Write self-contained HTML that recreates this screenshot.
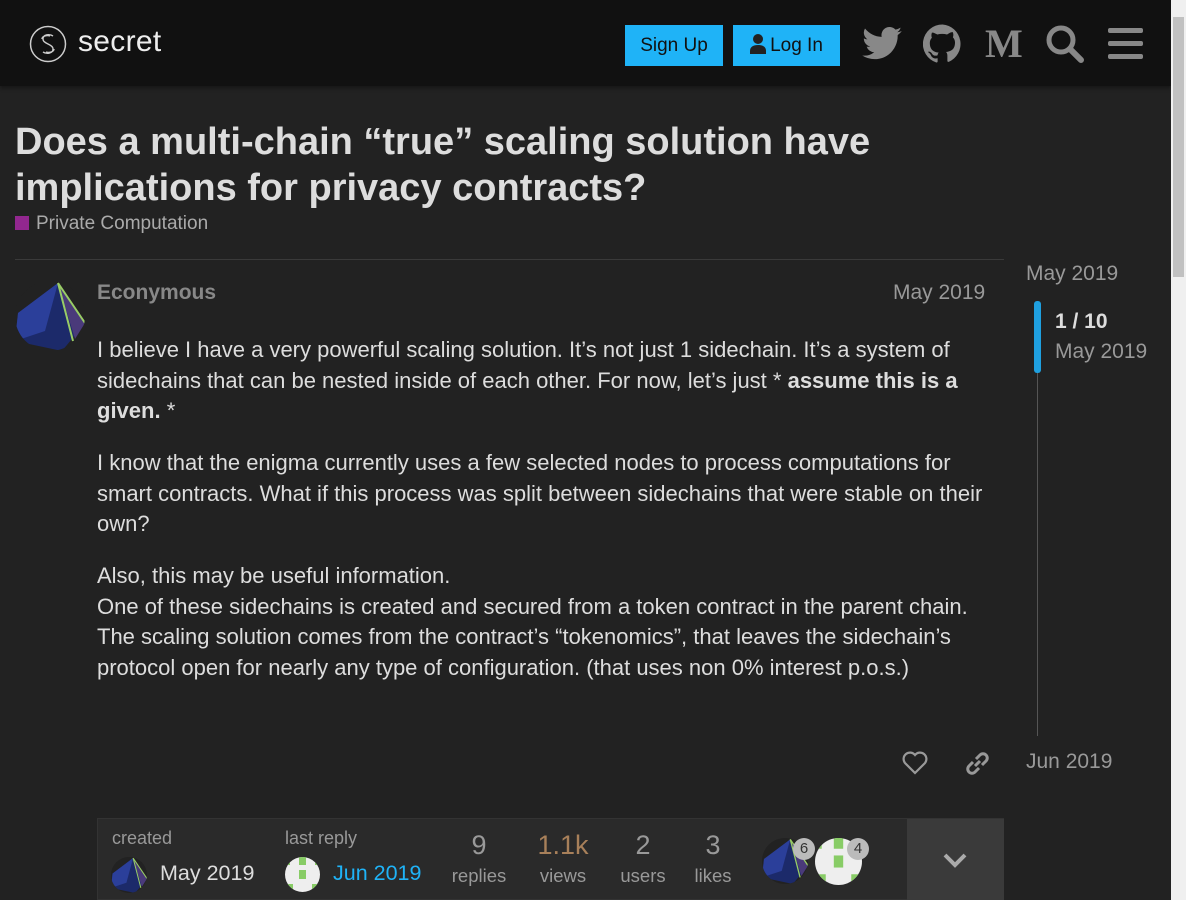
<!DOCTYPE html>
<html><head><meta charset="utf-8"><style>
*{box-sizing:border-box;margin:0;padding:0}
body{width:1186px;height:900px;overflow:hidden;background:#222;font-family:"Liberation Sans",sans-serif;color:#ddd;position:relative}
.hdr{position:absolute;left:0;top:0;width:1171px;height:86px;background:#111;box-shadow:0 2px 4px rgba(0,0,0,.4)}
.sb{position:absolute;right:0;top:0;width:15px;height:900px;background:#f0f0f0}
.sb div{position:absolute;left:2px;top:17px;width:11px;height:260px;background:#c1c1c1}
.btn{position:absolute;top:25px;height:41px;background:#1fb3f7;color:#111;font-size:19px;line-height:41px;text-align:center}
.ic{position:absolute;top:24px}
h1{position:absolute;left:15px;top:119px;font-size:38px;line-height:46px;font-weight:bold;color:#ddd;width:1000px}
.cat{position:absolute;left:15px;top:213px;font-size:19px;color:#aaa}
.cat i{display:inline-block;width:14px;height:14px;background:#92278f;margin-right:7px;vertical-align:-1px}
.line{position:absolute;left:15px;top:259px;width:989px;height:1px;background:#3a3a3a}
.p{position:absolute;left:97px;font-size:22px;line-height:30.5px;color:#ddd;width:900px}
.g{color:#999}
.d{font-size:21px}
</style></head><body>
<svg width="0" height="0" style="position:absolute"><defs>
<symbol id="pyr" viewBox="0 0 70 70"><rect width="70" height="70" fill="#222"/><polygon points="43,2 70,42 47,70 0,60 3,32" fill="#1c2a6a"/><polygon points="43,2 3,32 0,60 30,50" fill="#2b3f9a"/><polygon points="43,2 70,42 60,58" fill="#4a3a7a"/><path d="M43 2L70 42M43 2L58 60" stroke="#9c6" stroke-width="2"/></symbol>
<symbol id="idn" viewBox="0 0 35 35"><rect width="35" height="35" fill="#eee"/><rect x="14" y="0" width="7" height="8" fill="#8c6"/><rect x="14" y="13" width="7" height="9" fill="#8c6"/><rect x="0" y="27" width="8" height="8" fill="#8c6"/><rect x="27" y="27" width="8" height="8" fill="#8c6"/><rect x="0" y="0" width="5" height="8" fill="#8c6"/><rect x="30" y="0" width="5" height="8" fill="#8c6"/></symbol>
</defs></svg>
<div class="hdr">
<svg style="position:absolute;left:29px;top:24px" width="40" height="40" viewBox="0 0 40 40"><circle cx="19" cy="20" r="17.5" fill="none" stroke="#ccc" stroke-width="1.5"/><path d="M24 12c-3-2-10-2-10 3s10 5 10 10-7 5-10 3M21 12c-3-1-8 0-8 3M17 28c3 1 8 0 8-3" fill="none" stroke="#ccc" stroke-width="1.4"/></svg>
<div style="position:absolute;left:78px;top:25px;font-size:30px;color:#eee;letter-spacing:.3px">secret</div>
<div class="btn" style="left:625px;width:98px">Sign Up</div>
<div class="btn" style="left:733px;width:107px"><svg width="16" height="20" viewBox="0 0 16 20" style="vertical-align:-3px;margin-right:4px"><circle cx="8" cy="5" r="5" fill="#222"/><path d="M0 20v-3c0-4 3-6 8-6s8 2 8 6v3z" fill="#222"/></svg>Log In</div>
<svg class="ic" style="left:862px;top:27px" width="40" height="33" viewBox="0 0 24 20"><path fill="#888" d="M24 2.4a10 10 0 0 1-2.8.8A5 5 0 0 0 23.3.4a10 10 0 0 1-3.1 1.2A4.9 4.9 0 0 0 11.8 6 14 14 0 0 1 1.7.9a4.9 4.9 0 0 0 1.5 6.6 5 5 0 0 1-2.2-.6 4.9 4.9 0 0 0 3.9 4.9 5 5 0 0 1-2.2.1 4.9 4.9 0 0 0 4.6 3.4A9.9 9.9 0 0 1 0 17.3 14 14 0 0 0 7.5 19.5c9 0 14-7.5 14-14v-.6A10 10 0 0 0 24 2.4z"/></svg>
<svg class="ic" style="left:923px" width="39" height="39" viewBox="0 0 24 24"><path fill="#888" d="M12 .3a12 12 0 0 0-3.8 23.4c.6.1.8-.3.8-.6v-2c-3.3.7-4-1.6-4-1.6-.6-1.4-1.4-1.8-1.4-1.8-1-.7.1-.7.1-.7 1.2.1 1.8 1.2 1.8 1.2 1 1.8 2.8 1.3 3.5 1 0-.8.4-1.3.7-1.6-2.7-.3-5.5-1.3-5.5-6 0-1.2.5-2.3 1.3-3.1-.2-.4-.6-1.6 0-3.2 0 0 1-.3 3.3 1.2a11.5 11.5 0 0 1 6 0C17.3 4.6 18.3 5 18.3 5c.7 1.6.2 2.8.1 3.2.8.8 1.3 1.9 1.3 3.1 0 4.6-2.8 5.6-5.5 5.9.4.4.8 1.1.8 2.2v3.3c0 .3.2.7.8.6A12 12 0 0 0 12 .3"/></svg>
<div class="ic" style="left:985px;top:20px;font-family:'Liberation Serif',serif;font-weight:bold;font-size:40px;color:#888">M</div>
<svg class="ic" style="left:1045px" width="40" height="40" viewBox="0 0 40 40"><circle cx="16" cy="16" r="12" fill="none" stroke="#888" stroke-width="5"/><path d="M25 25l11 11" stroke="#888" stroke-width="6" stroke-linecap="round"/></svg>
<svg class="ic" style="left:1108px;top:28px" width="35" height="31"><rect y="0" width="35" height="5" rx="2" fill="#888"/><rect y="13" width="35" height="5" rx="2" fill="#888"/><rect y="26" width="35" height="5" rx="2" fill="#888"/></svg>
</div>
<div class="sb"><div></div></div>
<h1>Does a multi-chain “true” scaling solution have implications for privacy contracts?</h1>
<div class="cat"><i></i>Private Computation</div>
<div class="line"></div>
<svg style="position:absolute;left:15px;top:281px;border-radius:50%" width="70" height="70"><use href="#pyr"/></svg>
<div class="d" style="position:absolute;left:97px;top:281px;font-weight:bold;color:#888">Econymous</div>
<div class="d" style="position:absolute;left:893px;top:281px;color:#999">May 2019</div>
<div class="p" style="top:335px">I believe I have a very powerful scaling solution. It’s not just 1 sidechain. It’s a system of sidechains that can be nested inside of each other. For now, let’s just * <b>assume this is a given.</b> *</div>
<div class="p" style="top:448px">I know that the enigma currently uses a few selected nodes to process computations for smart contracts. What if this process was split between sidechains that were stable on their own?</div>
<div class="p" style="top:561px">Also, this may be useful information.<br>One of these sidechains is created and secured from a token contract in the parent chain. The scaling solution comes from the contract’s “tokenomics”, that leaves the sidechain’s protocol open for nearly any type of configuration. (that uses non 0% interest p.o.s.)</div>
<svg style="position:absolute;left:902px;top:751px" width="26" height="24" viewBox="0 0 26 24"><path d="M13 22L3 12a6 6 0 0 1 10-8 6 6 0 0 1 10 8z" fill="none" stroke="#999" stroke-width="2.2"/></svg>
<svg style="position:absolute;left:964px;top:750px" width="27" height="27" viewBox="0 0 27 27"><path d="M11 16l5-5M9 12l-4 4a4 4 0 0 0 6 6l4-4M18 15l4-4a4 4 0 0 0-6-6l-4 4" fill="none" stroke="#999" stroke-width="3"/></svg>
<div class="d" style="position:absolute;left:1026px;top:262px;color:#999">May 2019</div>
<div style="position:absolute;left:1037px;top:372px;width:1px;height:364px;background:#555"></div>
<div style="position:absolute;left:1034px;top:301px;width:7px;height:72px;background:#1fa0e0;border-radius:3px"></div>
<div class="d" style="position:absolute;left:1055px;top:310px;font-weight:bold;color:#ddd">1 / 10</div>
<div class="d" style="position:absolute;left:1055px;top:340px;color:#999">May 2019</div>
<div class="d" style="position:absolute;left:1026px;top:750px;color:#999">Jun 2019</div>
<div style="position:absolute;left:97px;top:818px;width:907px;height:82px;background:#2a2a2a;border:1px solid #333"></div>
<div style="position:absolute;left:907px;top:819px;width:97px;height:81px;background:#3a3a3a"></div>
<svg style="position:absolute;left:942px;top:852px" width="27" height="17"><path d="M3 3l10 10 10-10" fill="none" stroke="#aaa" stroke-width="4"/></svg>
<div style="position:absolute;left:112px;top:828px;font-size:18px" class="g">created</div>
<svg style="position:absolute;left:111px;top:857px;border-radius:50%" width="36" height="36"><use href="#pyr"/></svg>
<div style="position:absolute;left:160px;top:861px;font-size:21.5px;color:#ddd">May 2019</div>
<div style="position:absolute;left:285px;top:828px;font-size:18px" class="g">last reply</div>
<svg style="position:absolute;left:285px;top:857px;border-radius:50%" width="35" height="35"><use href="#idn"/></svg>
<div style="position:absolute;left:333px;top:861px;font-size:21.5px;color:#1fb3f7">Jun 2019</div>
<div style="position:absolute;left:440px;top:830px;width:78px;text-align:center;font-size:27px;color:#999">9<div style="font-size:18.5px;margin-top:4px">replies</div></div>
<div style="position:absolute;left:526px;top:830px;width:74px;text-align:center;font-size:27px;color:#a8805a">1.1k<div style="font-size:18.5px;margin-top:4px;color:#999">views</div></div>
<div style="position:absolute;left:608px;top:830px;width:70px;text-align:center;font-size:27px;color:#999">2<div style="font-size:18.5px;margin-top:4px">users</div></div>
<div style="position:absolute;left:683px;top:830px;width:60px;text-align:center;font-size:27px;color:#999">3<div style="font-size:18.5px;margin-top:4px">likes</div></div>
<svg style="position:absolute;left:762px;top:838px;border-radius:50%" width="46" height="46"><use href="#pyr"/></svg>
<div style="position:absolute;left:793px;top:838px;width:22px;height:22px;border-radius:11px;background:#bbb;color:#333;font-size:15px;text-align:center;line-height:22px">6</div>
<svg style="position:absolute;left:815px;top:838px;border-radius:50%" width="47" height="47"><use href="#idn"/></svg>
<div style="position:absolute;left:847px;top:838px;width:22px;height:22px;border-radius:11px;background:#bbb;color:#333;font-size:15px;text-align:center;line-height:22px">4</div>
</body></html>
